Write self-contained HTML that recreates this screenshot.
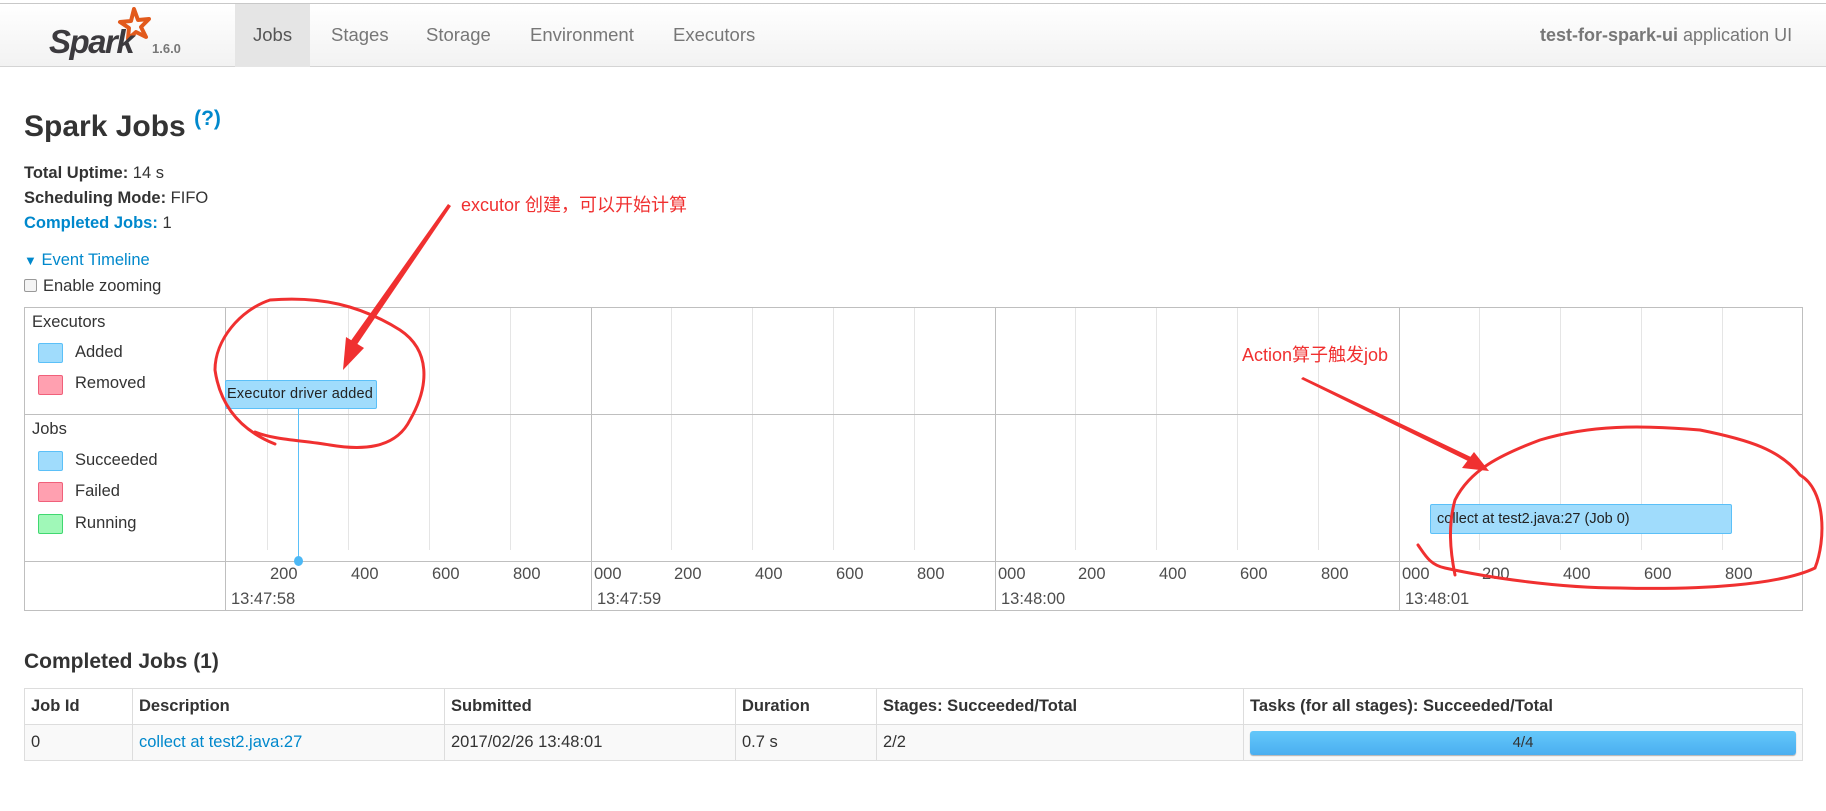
<!DOCTYPE html>
<html><head><meta charset="utf-8"><style>
*{box-sizing:border-box}
body{margin:0;width:1826px;height:811px;overflow:hidden;background:#fff;font-family:"Liberation Sans",Arial,sans-serif;color:#333;position:relative}
.abs{position:absolute;white-space:nowrap}
.nav{position:absolute;left:0;top:3px;width:1826px;height:64px;background:linear-gradient(#fff,#f2f2f2);border-top:1px solid #c8c8c8;border-bottom:1px solid #d4d4d4}
.nav .it{position:absolute;top:20px;font-size:18.5px;color:#777}
.jobs{position:absolute;left:235px;top:0;width:75px;height:63px;background:#e5e5e5}
.b{font-weight:bold}
.info{font-size:16.5px}
.lnk{color:#0088cc}
.tl{position:absolute;left:24px;top:307px;width:1779px;height:304px;border:1px solid #bfbfbf}
.vl{position:absolute;top:0;width:1px;background:#e5e5e5}
.lg{position:absolute;left:7px;font-size:16.5px}
.sw{position:absolute;left:13px;width:25px;height:20px;border:1px solid;border-radius:2px}
.ax{position:absolute;font-size:16.5px;color:#4d4d4d}
table{position:absolute;left:24px;top:688px;width:1779px;border-collapse:collapse;font-size:16.5px}
td,th{border:1px solid #ddd;text-align:left;padding:0 6px;height:36px}
th{font-weight:bold}
tr.r td{background:#f9f9f9}
</style></head><body>
<div class="nav">
 <div class="jobs"></div>
 <svg class="abs" style="left:48px;top:2px" width="105" height="58" viewBox="0 0 105 58">
  <path d="M86 3 L90 14 L101 13 L93 21 L98 31 L88 26 L80 33 L81 22 L72 16 L83 15 Z" fill="none" stroke="#e25a1c" stroke-width="4" stroke-linejoin="round"/>
  <text x="1" y="47" font-family="Liberation Sans" font-style="italic" font-weight="bold" font-size="33" fill="#3c3a3e" letter-spacing="-1.5">Spark</text>
 </svg>
 <div class="abs" style="left:152px;top:37px;font-size:13px;font-weight:bold;color:#777">1.6.0</div>
 <div class="it" style="left:253px;color:#555">Jobs</div>
 <div class="it" style="left:331px">Stages</div>
 <div class="it" style="left:426px">Storage</div>
 <div class="it" style="left:530px">Environment</div>
 <div class="it" style="left:673px">Executors</div>
 <div class="it" style="left:1540px;top:21px;font-size:18px"><b>test-for-spark-ui</b> application UI</div>
</div>
<div class="abs b" style="left:24px;top:107px;font-size:30px">Spark Jobs <sup style="font-size:21px;font-weight:bold;color:#0088cc">(?)</sup></div>
<div class="abs info" style="left:24px;top:164px"><b>Total Uptime:</b> 14 s</div>
<div class="abs info" style="left:24px;top:189px"><b>Scheduling Mode:</b> FIFO</div>
<div class="abs info" style="left:24px;top:214px"><b class="lnk">Completed Jobs:</b> 1</div>
<div class="abs info lnk" style="left:24px;top:251px"><span style="font-size:13px">&#9660;</span> Event Timeline</div>
<div class="abs info" style="left:24px;top:277px"><span style="display:inline-block;width:13px;height:13px;border:1px solid #999;border-radius:2px;vertical-align:-1px;margin-right:6px;background:#f4f4f4"></span>Enable zooming</div>

<div class="tl">
 <div class="vl" style="left:242px;height:242px"></div><div class="vl" style="left:323px;height:242px"></div><div class="vl" style="left:404px;height:242px"></div><div class="vl" style="left:485px;height:242px"></div>
 <div class="vl" style="left:646px;height:242px"></div><div class="vl" style="left:727px;height:242px"></div><div class="vl" style="left:808px;height:242px"></div><div class="vl" style="left:889px;height:242px"></div>
 <div class="vl" style="left:1050px;height:242px"></div><div class="vl" style="left:1131px;height:242px"></div><div class="vl" style="left:1212px;height:242px"></div><div class="vl" style="left:1293px;height:242px"></div>
 <div class="vl" style="left:1454px;height:242px"></div><div class="vl" style="left:1535px;height:242px"></div><div class="vl" style="left:1616px;height:242px"></div><div class="vl" style="left:1697px;height:242px"></div>
 <div class="vl" style="left:200px;height:302px;background:#bfbfbf"></div>
 <div class="vl" style="left:566px;height:302px;background:#bfbfbf"></div>
 <div class="vl" style="left:970px;height:302px;background:#bfbfbf"></div>
 <div class="vl" style="left:1374px;height:302px;background:#bfbfbf"></div>
 <div style="position:absolute;left:0;top:106px;width:100%;height:1px;background:#bfbfbf"></div>
 <div style="position:absolute;left:0;top:253px;width:100%;height:1px;background:#bfbfbf"></div>
 <div class="lg" style="top:5px">Executors</div>
 <div class="sw" style="top:35px;background:#a0dcfc;border-color:#5bc0f8"></div><div class="lg" style="left:50px;top:35px">Added</div>
 <div class="sw" style="top:67px;background:#ffa0b0;border-color:#f0607a"></div><div class="lg" style="left:50px;top:66px">Removed</div>
 <div class="lg" style="top:112px">Jobs</div>
 <div class="sw" style="top:143px;background:#a0dcfc;border-color:#5bc0f8"></div><div class="lg" style="left:50px;top:143px">Succeeded</div>
 <div class="sw" style="top:174px;background:#ffa0b0;border-color:#f0607a"></div><div class="lg" style="left:50px;top:174px">Failed</div>
 <div class="sw" style="top:206px;background:#a0f8b8;border-color:#40d870"></div><div class="lg" style="left:50px;top:206px">Running</div>
 <div style="position:absolute;left:200px;top:72px;width:152px;height:29px;background:#a0dcfc;border:1px solid #5bc0f8;border-radius:2px;font-size:14.5px;line-height:27px;padding-left:1px;color:#222;letter-spacing:0.2px">Executor driver added</div>
 <div style="position:absolute;left:273px;top:101px;width:1px;height:152px;background:#5bc0f8"></div>
 <div style="position:absolute;left:269px;top:248px;width:9px;height:10px;border-radius:50%;background:#4cb8f5"></div>
 <div style="position:absolute;left:1405px;top:196px;width:302px;height:30px;background:#a0dcfc;border:1px solid #5bc0f8;border-radius:2px;font-size:14.5px;line-height:28px;padding-left:6px;color:#222">collect at test2.java:27 (Job 0)</div>
 <div class="ax" style="left:245px;top:257px">200</div><div class="ax" style="left:326px;top:257px">400</div><div class="ax" style="left:407px;top:257px">600</div><div class="ax" style="left:488px;top:257px">800</div>
 <div class="ax" style="left:569px;top:257px">000</div><div class="ax" style="left:649px;top:257px">200</div><div class="ax" style="left:730px;top:257px">400</div><div class="ax" style="left:811px;top:257px">600</div><div class="ax" style="left:892px;top:257px">800</div>
 <div class="ax" style="left:973px;top:257px">000</div><div class="ax" style="left:1053px;top:257px">200</div><div class="ax" style="left:1134px;top:257px">400</div><div class="ax" style="left:1215px;top:257px">600</div><div class="ax" style="left:1296px;top:257px">800</div>
 <div class="ax" style="left:1377px;top:257px">000</div><div class="ax" style="left:1457px;top:257px">200</div><div class="ax" style="left:1538px;top:257px">400</div><div class="ax" style="left:1619px;top:257px">600</div><div class="ax" style="left:1700px;top:257px">800</div>
 <div class="ax" style="left:206px;top:282px">13:47:58</div><div class="ax" style="left:572px;top:282px">13:47:59</div><div class="ax" style="left:976px;top:282px">13:48:00</div><div class="ax" style="left:1380px;top:282px">13:48:01</div>
</div>

<div class="abs b" style="left:24px;top:650px;font-size:21px">Completed Jobs (1)</div>
<table>
<tr><th style="width:108px">Job Id</th><th style="width:312px">Description</th><th style="width:291px">Submitted</th><th style="width:141px">Duration</th><th style="width:367px">Stages: Succeeded/Total</th><th>Tasks (for all stages): Succeeded/Total</th></tr>
<tr class="r"><td>0</td><td class="lnk">collect at test2.java:27</td><td>2017/02/26 13:48:01</td><td>0.7 s</td><td>2/2</td><td style="padding:0 6px"><div style="height:24px;border-radius:3px;background:linear-gradient(#64c8fa,#4aaef0);text-align:center;line-height:24px;font-size:15px;box-shadow:0 1px 1px rgba(0,0,0,.3)">4/4</div></td></tr>
</table>

<div class="abs" style="left:461px;top:191px;font-size:18px;color:#f03030;font-family:'Liberation Sans','Noto Sans CJK SC',sans-serif">excutor 创建，可以开始计算</div>
<div class="abs" style="left:1242px;top:341px;font-size:18px;color:#f03030;font-family:'Liberation Sans','Noto Sans CJK SC',sans-serif">Action算子触发job</div>
<svg class="abs" style="left:0;top:0" width="1826" height="811">
 <g fill="#f03030" stroke="none">
  <polygon points="448,204 451,206 356,346 350,342"/>
  <polygon points="343,370 346,337 364,348"/>
  <polygon points="1301,379 1303,377 1473,458 1470,462"/>
  <polygon points="1489,471 1462,468 1474,452"/>
 </g>
 <g fill="none" stroke="#f03030" stroke-width="3" stroke-linecap="round">
  <path d="M275,444 C240,430 220,405 215,370 C215,340 240,310 270,300 C320,296 360,305 400,330 C430,350 430,385 410,420 C395,450 360,450 330,445 C300,440 275,440 255,432"/>
  <path d="M1418,545 C1425,555 1430,565 1445,568 C1490,578 1560,588 1620,588 C1700,590 1780,585 1815,568 C1826,540 1826,490 1800,475 C1780,450 1750,440 1700,430 C1640,425 1590,425 1540,440 C1500,455 1470,470 1455,500 C1448,525 1450,550 1455,575"/>
 </g>
</svg>
</body></html>
